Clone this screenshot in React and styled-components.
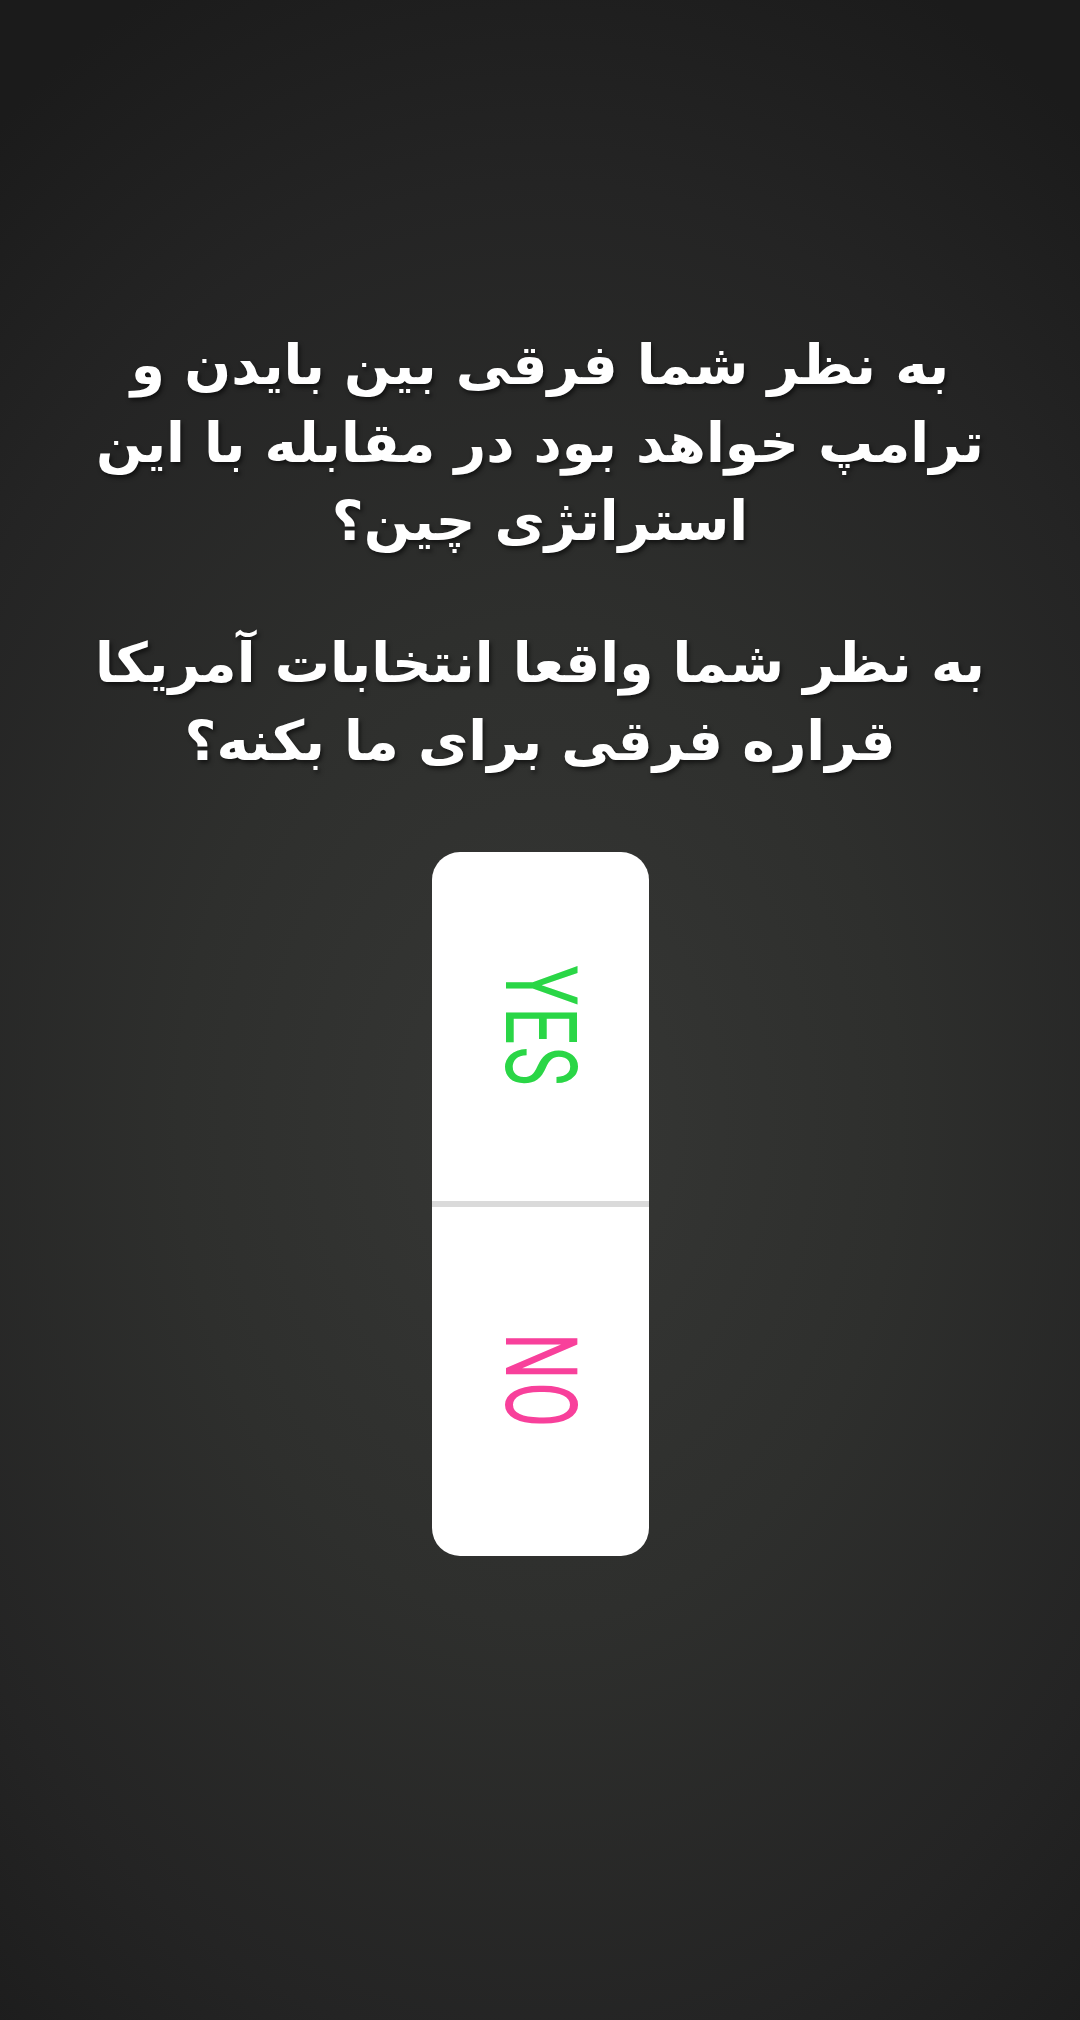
import React from "react";
import styled, { createGlobalStyle } from "styled-components";

const GlobalStyle = createGlobalStyle`
  html, body {
    margin: 0;
    padding: 0;
    background: #1c1c1c;
  }
`;

const Screen = styled.div`
  width: 1080px;
  height: 2020px;
  overflow: hidden;
  display: flex;
  flex-direction: column;
  align-items: center;
  background: radial-gradient(
    ellipse 900px 1250px at 540px 1120px,
    #363735 0%,
    #2e2f2d 40%,
    #242424 75%,
    #1b1b1b 100%
  );
`;

const Question = styled.div`
  margin-top: 326px;
  display: flex;
  flex-direction: column;
  align-items: center;
  gap: 64px;
  direction: rtl;
  font-family: "DejaVu Sans", sans-serif;
  font-weight: 700;
  color: #fff;
  text-shadow: 2px 3px 4px rgba(0, 0, 0, 0.55);
`;

const Para = styled.div`
  display: flex;
  flex-direction: column;
  align-items: center;
`;

const Line = styled.div`
  white-space: nowrap;
  font-size: 55px;
  line-height: 78px;
`;

const Poll = styled.div`
  margin-top: 72px;
  width: 217px;
  height: 704px;
  background: #fff;
  border-radius: 28px;
  display: flex;
  flex-direction: column;
  overflow: hidden;
`;

const Option = styled.div`
  flex: 1;
  display: flex;
  align-items: center;
  justify-content: center;
`;

const Divider = styled.div`
  height: 6px;
  background: #dadada;
`;

const Label = styled.span`
  writing-mode: vertical-rl;
  font-family: Roboto, "Liberation Sans", sans-serif;
  font-weight: 400;
  font-size: 100px;
  line-height: 1;
  letter-spacing: 3px;
  color: ${(p) => p.$color};
  transform: scaleY(0.66);
`;

export default function App() {
  return (
    <>
      <GlobalStyle />
      <Screen>
        <Question>
          <Para>
            <Line>به نظر شما فرقی بین بایدن و</Line>
            <Line>ترامپ خواهد بود در مقابله با این</Line>
            <Line>استراتژی چین؟</Line>
          </Para>
          <Para>
            <Line>به نظر شما واقعا انتخابات آمریکا</Line>
            <Line>قراره فرقی برای ما بکنه؟</Line>
          </Para>
        </Question>
        <Poll>
          <Option>
            <Label $color="#2ad646">YES</Label>
          </Option>
          <Divider />
          <Option>
            <Label $color="#f8409b">NO</Label>
          </Option>
        </Poll>
      </Screen>
    </>
  );
}
